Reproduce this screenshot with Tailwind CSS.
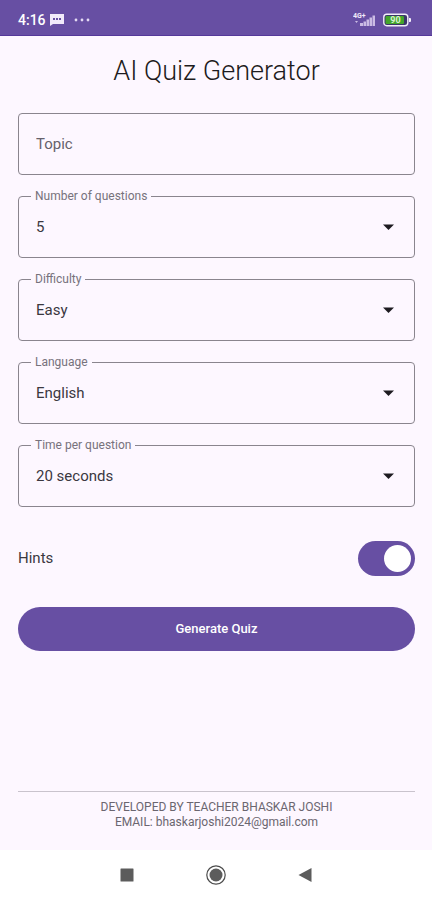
<!DOCTYPE html>
<html lang="en">
<head>
<meta charset="utf-8">
<meta name="viewport" content="width=device-width, initial-scale=1">
<title>AI Quiz Generator</title>
<script src="https://cdn.jsdelivr.net/npm/@tailwindcss/browser@4"></script>
</head>
<body class="flex min-h-screen flex-col bg-[#fdf7ff] font-['Roboto',sans-serif] text-[#1d1b20]">
  <header class="flex h-9 items-center justify-between border-b border-[#55389a] bg-[#674fa3] pt-1 pr-[21px] pl-[18px] text-white">
    <div class="flex items-center">
      <span class="text-sm font-medium">4:16</span>
      <svg class="ml-1 h-3 w-[14px]" viewBox="0 0 14 12" fill="#f1eafa" aria-hidden="true">
        <path d="M0 0h14v10H3L0 12z"/>
        <path d="M3 4h2v2H3zM6 4h2v2H6zM9 4h2v2H9z" fill="#674fa3"/>
      </svg>
      <svg class="ml-[10px] h-1 w-4" viewBox="0 0 16 4" fill="#e4daf3" aria-hidden="true">
        <circle cx="2" cy="2" r="1.400"/><circle cx="8" cy="2" r="1.400"/><circle cx="14" cy="2" r="1.400"/>
      </svg>
    </div>
    <div class="flex items-center gap-2">
      <svg class="h-[14px] w-[22px]" viewBox="0 0 22 14" fill="#cbbce4" role="img" aria-label="4G+ signal">
        <text x="0" y="5" font-size="7" font-weight="700" fill="#f1eafa">4G+</text>
        <path d="M7 10h3v3H7zM10.500 8.500h2.500V13h-2.500zM13.500 6.500H16V13h-2.500zM16.500 4.500H19V13h-2.500zM19.500 2.500H22V13h-2.500z"/>
        <path d="M2 8h3l-1.500 2z"/>
      </svg>
      <svg class="h-[14px] w-[28px]" viewBox="0 0 28 14" role="img" aria-label="Battery 90 percent">
        <rect x=".8" y="1.300" width="24" height="11.400" rx="3" fill="#3b3568" stroke="#f3eefa" stroke-width="1.400"/>
        <rect x="2.500" y="3" width="18.500" height="8" rx="1.200" fill="#43a52b"/>
        <path d="M26 5h1a1 1 0 0 1 1 1v2a1 1 0 0 1-1 1h-1z" fill="#f3eefa"/>
        <text x="12.500" y="10.200" font-size="9" font-weight="700" fill="#d9f0d0" text-anchor="middle">90</text>
      </svg>
    </div>
  </header>

  <main class="flex grow flex-col pt-[17px] pr-[17px] pl-[18px]">
    <h1 class="text-center text-[27px] leading-9 font-light">AI Quiz Generator</h1>

    <form class="mt-6 flex flex-col">
      <div class="flex flex-col gap-[21px]">
        <input type="text" aria-label="Topic" placeholder="Topic" class="h-[62px] w-full rounded-[4px] border border-[#8a858e] bg-transparent px-[17px] text-[15px] text-[#1d1b20] placeholder:text-[#66616b]">

        <div class="relative">
          <label for="count" class="absolute -top-2 left-[13px] bg-[#fdf7ff] px-1 text-xs leading-4 text-[#77727c]">Number of questions</label>
          <select id="count" class="h-[62px] w-full appearance-none rounded-[4px] border border-[#8a858e] bg-transparent px-[17px] text-[15px] text-[#3b383f]"><option>5</option><option>10</option></select>
          <svg class="pointer-events-none absolute top-7 right-[21px] h-[6px] w-[11px]" viewBox="0 0 11 6" fill="#1d1b20" aria-hidden="true"><path d="M0 .5h11L5.500 6z"/></svg>
        </div>

        <div class="relative">
          <label for="difficulty" class="absolute -top-2 left-[13px] bg-[#fdf7ff] px-1 text-xs leading-4 text-[#77727c]">Difficulty</label>
          <select id="difficulty" class="h-[62px] w-full appearance-none rounded-[4px] border border-[#8a858e] bg-transparent px-[17px] text-[15px] text-[#3b383f]"><option>Easy</option><option>Hard</option></select>
          <svg class="pointer-events-none absolute top-7 right-[21px] h-[6px] w-[11px]" viewBox="0 0 11 6" fill="#1d1b20" aria-hidden="true"><path d="M0 .5h11L5.500 6z"/></svg>
        </div>

        <div class="relative">
          <label for="language" class="absolute -top-2 left-[13px] bg-[#fdf7ff] px-1 text-xs leading-4 text-[#77727c]">Language</label>
          <select id="language" class="h-[62px] w-full appearance-none rounded-[4px] border border-[#8a858e] bg-transparent px-[17px] text-[15px] text-[#3b383f]"><option>English</option><option>Hindi</option></select>
          <svg class="pointer-events-none absolute top-7 right-[21px] h-[6px] w-[11px]" viewBox="0 0 11 6" fill="#1d1b20" aria-hidden="true"><path d="M0 .5h11L5.500 6z"/></svg>
        </div>

        <div class="relative">
          <label for="time" class="absolute -top-2 left-[13px] bg-[#fdf7ff] px-1 text-xs leading-4 text-[#77727c]">Time per question</label>
          <select id="time" class="h-[62px] w-full appearance-none rounded-[4px] border border-[#8a858e] bg-transparent px-[17px] text-[15px] text-[#3b383f]"><option>20 seconds</option><option>30 seconds</option></select>
          <svg class="pointer-events-none absolute top-7 right-[21px] h-[6px] w-[11px]" viewBox="0 0 11 6" fill="#1d1b20" aria-hidden="true"><path d="M0 .5h11L5.500 6z"/></svg>
        </div>
      </div>

      <div class="mt-[34px] flex items-center justify-between">
        <label for="hints" class="text-[15px] text-[#3b383f]">Hints</label>
        <input id="hints" type="checkbox" role="switch" checked class="h-[35px] w-[57px] appearance-none rounded-full bg-[#674fa3] p-1 before:block before:size-[27px] before:rounded-full before:bg-white checked:before:ml-auto">
      </div>

      <button type="button" class="mt-[31px] h-11 w-full rounded-full bg-[#674fa3] text-[13px] font-medium text-white">Generate Quiz</button>
    </form>

    <footer class="mt-auto mb-5 border-t border-[#c9c3cd] pt-2 text-center text-xs leading-[15px] text-[#6b6670]">
      <p>DEVELOPED BY TEACHER BHASKAR JOSHI</p>
      <p>EMAIL: bhaskarjoshi2024@gmail.com</p>
    </footer>
  </main>

  <nav class="flex h-[50px] items-center justify-center gap-[65px] bg-white" aria-label="System">
    <button type="button" aria-label="Recent apps" class="flex size-6 items-center justify-center"><svg class="size-[14px]" viewBox="0 0 14 14" fill="#5c5c5c"><rect x=".5" y=".5" width="13" height="13" rx=".5"/></svg></button>
    <button type="button" aria-label="Home" class="flex size-6 items-center justify-center"><svg class="size-5" viewBox="0 0 20 20"><circle cx="10" cy="10" r="9.200" fill="none" stroke="#4c4c4c" stroke-width="1.200"/><circle cx="10" cy="10" r="6.500" fill="#5c5c5c"/></svg></button>
    <button type="button" aria-label="Back" class="flex size-6 items-center justify-center"><svg class="size-[14px]" viewBox="0 0 14 14" fill="#5c5c5c"><path d="M13.500 0v14L.5 7z"/></svg></button>
  </nav>
</body>
</html>
